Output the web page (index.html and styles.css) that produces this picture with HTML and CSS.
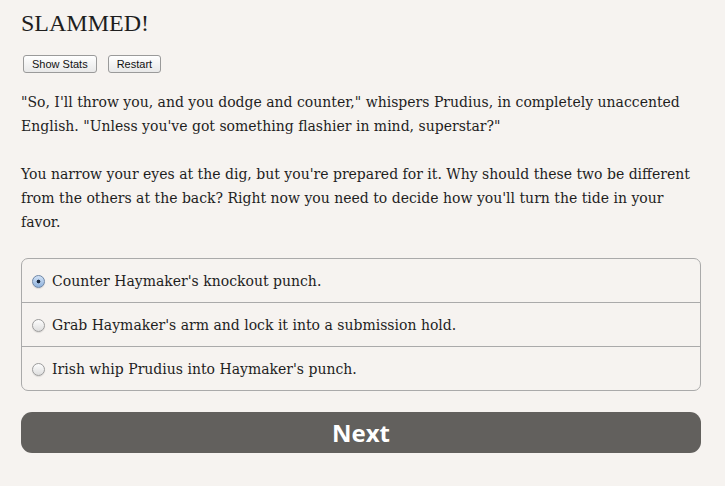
FILE: index.html
```html
<!DOCTYPE html>
<html lang="en">
<head>
    <meta charset="UTF-8">
    <title>SLAMMED!</title>
    <link rel="stylesheet" href="styles.css">
</head>
<body>
    <div class="page">
        <h1 class="title">SLAMMED!</h1>
        <div class="tools">
            <button class="tool">Show Stats</button>
            <button class="tool">Restart</button>
        </div>
        <div class="story">
            <p>"So, I'll throw you, and you dodge and counter," whispers Prudius, in completely unaccented English. "Unless you've got something flashier in mind, superstar?"</p>
            <p>You narrow your eyes at the dig, but you're prepared for it. Why should these two be different from the others at the back? Right now you need to decide how you'll turn the tide in your favor.</p>
        </div>
        <ul class="choices">
            <li class="choice"><input type="radio" name="choice" checked> Counter Haymaker's knockout punch.</li>
            <li class="choice"><input type="radio" name="choice"> Grab Haymaker's arm and lock it into a submission hold.</li>
            <li class="choice"><input type="radio" name="choice"> Irish whip Prudius into Haymaker's punch.</li>
        </ul>
        <button class="next">Next</button>
    </div>
</body>
</html>
```

FILE: styles.css
```css
body{
    margin: 0;
    background-color: #f6f3f0;
    color: #1e1e1e;
    font-family: 'DejaVu Serif', serif;
}

.page{
    padding: 0 24px 0 21px;
}

.title{
    font-family: 'Liberation Serif', serif;
    font-weight: normal;
    font-size: 24px;
    margin: 0;
    padding-top: 10px;
    height: 45px;
}

.tools{
    display: flex;
    gap: 11px;
    padding-left: 2px;
}

.tool{
    font-family: 'Liberation Sans', sans-serif;
    font-size: 11px;
    color: #111;
    background: linear-gradient(#ffffff, #e8e8e8);
    border: 1px solid #9a9a9a;
    border-radius: 3px;
    height: 18px;
    padding: 0 8px;
}

.story{
    margin-top: 17px;
}

.story p{
    margin: 0 0 24px 0;
    font-size: 14px;
    line-height: 24px;
}

.choices{
    list-style: none;
    margin: 0;
    padding: 0;
    border: 1px solid #aaa;
    border-radius: 7px;
}

.choice{
    display: flex;
    align-items: center;
    gap: 3px;
    height: 43px;
    padding-left: 10px;
    font-size: 14px;
    border-top: 1px solid #aaa;
}

.choice:first-child{
    border-top: none;
}

.choice input{
    appearance: none;
    -webkit-appearance: none;
    margin: 1px 4px 0 0;
    width: 13px;
    height: 13px;
    border: 1px solid #9c9c9c;
    border-radius: 50%;
    background: linear-gradient(#fdfdfd, #dedede);
    box-shadow: 0 1px 1px rgba(0,0,0,0.1);
}

.choice input:checked{
    border-color: #6e86a6;
    background: radial-gradient(circle, #1a2a40 0 1.6px, transparent 2.2px), linear-gradient(#d2e2f6, #8fb2dc);
}

.next{
    display: block;
    width: 100%;
    height: 41px;
    margin-top: 21px;
    border: none;
    border-radius: 11px;
    background-color: #62605d;
    color: #fff;
    font-family: 'Open Sans', sans-serif;
    font-weight: bold;
    font-size: 24px;
}
```
